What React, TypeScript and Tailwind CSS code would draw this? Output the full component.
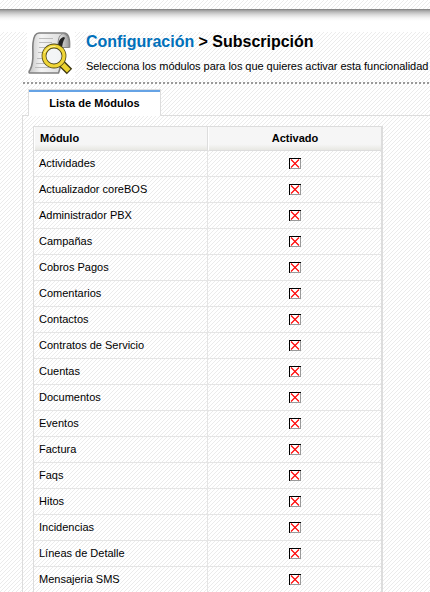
const modules = [
  'Actividades', 'Actualizador coreBOS', 'Administrador PBX', 'Campañas', 'Cobros Pagos',
  'Comentarios', 'Contactos', 'Contratos de Servicio', 'Cuentas', 'Documentos', 'Eventos',
  'Factura', 'Faqs', 'Hitos', 'Incidencias', 'Líneas de Detalle', 'Mensajeria SMS',
];

function DisabledMark() {
  return (
    <svg width="12" height="11" viewBox="0 0 12 11" className="block">
      <rect width="12" height="11" fill="#999" />
      <path d="M0 0h12v1H1v10H0z" fill="#000" />
      <rect x="1" y="1" width="10" height="9" fill="#fff" />
      <path d="M2 1.500l8 8M10 1.500l-8 8" stroke="#f00" strokeWidth="1.100" />
    </svg>
  );
}

function AuditIcon() {
  return (
    <svg width="48" height="48" viewBox="0 0 48 48" className="block shrink-0">
      <defs>
        <linearGradient id="paper" x1="0" y1="0" x2="1" y2="0">
          <stop offset="0" stopColor="#c4c4c4" />
          <stop offset=".3" stopColor="#f4f4f4" />
          <stop offset="1" stopColor="#d4d4d4" />
        </linearGradient>
        <linearGradient id="roll" x1="0" y1="0" x2="1" y2="0">
          <stop offset="0" stopColor="#eee" />
          <stop offset="1" stopColor="#999" />
        </linearGradient>
      </defs>
      <path d="M12 3H37c4 0 6 5 5.500 14h-8c-2 7 1 17-3 26H3c-1.500 0-1-2 0-3C8 31 5 22 6 13c.5-5 2-10 6-10z" fill="url(#paper)" stroke="#808080" strokeWidth="1.600" />
      <path d="M36 3.500c-5 2-5 8-5 14h11c1-7-1-13-6-14z" fill="url(#roll)" stroke="#888" />
      <path d="M37 7c-5 1-6 6-6 11l4 2c0-5 1-9 3-12z" fill="#242424" />
      <path d="M12 8.500h14M12 12.500h13M12 17.500h7M11 22.500h5M10 28.500h5M9 33.500h8M8 37.500h14" stroke="#bbb" />
      <path d="M34 33l8.500 8.500" stroke="#3b3510" strokeWidth="7.600" />
      <path d="M34 33l7.700 7.700" stroke="#ecd32e" strokeWidth="5" />
      <circle cx="27" cy="26" r="10" fill="#f4f6f7" fillOpacity=".9" stroke="#4f4818" strokeWidth="4.800" />
      <circle cx="27" cy="26" r="10" fill="none" stroke="#efd536" strokeWidth="3.200" />
      <path d="M17.500 23c2-5 7-7 11-6.500" fill="none" stroke="#fff7a5" />
    </svg>
  );
}

export default function App() {
  return (
    <div className="h-[592px] w-[430px] overflow-hidden bg-[linear-gradient(135deg,#fff_43%,#ebebeb_43%,#ebebeb_57%,#fff_57%)] bg-[length:4px_4px] font-['Liberation_Sans',Arial,sans-serif] text-[11px] leading-[13px] text-black">
      <div className="h-[9px]" />
      <div className="h-[23px] bg-[linear-gradient(#777_0,#999_1px,#bbb_3px,#ddd_6px,#f5f5f5_9px,#fff_12px)]" />
      <header className="-mt-[2px] flex h-[52px]">
        <div className="ml-[27px] h-12 w-12 bg-white"><AuditIcon /></div>
        <div className="ml-[11px] whitespace-nowrap">
          <h1 className="mt-[3px] text-[16px] leading-[18px] font-bold tracking-[-0.02px]"><span className="text-[#0070ba]">Configuración</span> &gt; Subscripción</h1>
          <p className="mt-[9px] tracking-[-0.045px]">Selecciona los módulos para los que quieres activar esta funcionalidad</p>
        </div>
      </header>
      <div className="ml-[23px] h-[2px] bg-[repeating-linear-gradient(90deg,#999_0_2px,transparent_2px_4px)]" />
      <div className="mt-[5px] flex h-[27px] pl-[22px]">
        <div className="w-[6px] border-b border-[#ddd]" />
        <div className="w-[133px] border-x border-t border-[#ddd] bg-white">
          <div className="h-[2px] bg-[#66a3e5]" />
          <div className="pt-[5px] text-center font-bold tracking-[0.04px]">Lista de Módulos</div>
        </div>
        <div className="flex-1 border-b border-[#ddd]" />
      </div>
      <div className="ml-[22px] h-[480px] border-l border-[#ddd] pt-[10px] pl-[10px]">
        <table className="w-[350px] table-fixed border-separate border-spacing-0 border-t border-r-2 border-l border-[#ddd]">
          <thead>
            <tr className="h-[24px]">
              <th className="w-[174px] border-r border-b border-l border-[#ddd] border-l-white bg-[linear-gradient(#f6f6f6_75%,#e8e8e3)] p-0 pl-[5px] text-left">Módulo</th>
              <th className="border-b border-l border-[#ddd] border-l-white bg-[linear-gradient(#f6f6f6_75%,#e8e8e3)] p-0 text-center">Activado</th>
            </tr>
          </thead>
          <tbody>
            {modules.map((name) => (
              <tr key={name} className="h-[26px]">
                <td className="border-r border-b border-[#e5e5e5] p-0 pl-[5px]">{name}</td>
                <td className="border-b border-[#e5e5e5] p-0"><div className="flex justify-center"><DisabledMark /></div></td>
              </tr>
            ))}
          </tbody>
        </table>
      </div>
    </div>
  );
}
